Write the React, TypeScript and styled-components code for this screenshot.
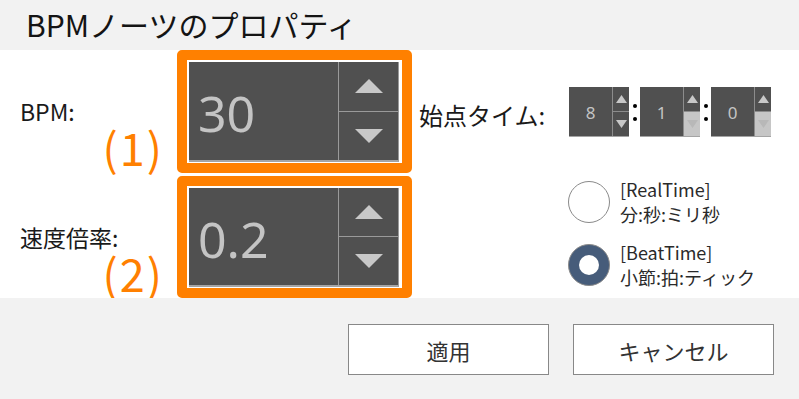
import styled, { createGlobalStyle } from 'styled-components'

const GlobalStyle = createGlobalStyle`
	html, body {
		margin: 0;
		padding: 0;
		background: #ffffff;
	}
	body {
		font-family: "Noto Sans CJK JP", "Noto Sans", sans-serif;
		color: #1a1a1a;
	}
`

const ORANGE = '#ff8000'
const FIELD = '#505050'
const ARROW = '#c8c8c8'

const Page = styled.div`
	display: flex;
	flex-direction: column;
	width: 799px;
	height: 399px;
	overflow: hidden;
`

const TitleBar = styled.div`
	display: flex;
	align-items: center;
	height: 50px;
	padding: 0 0 3px 26px;
	box-sizing: border-box;
	background: #f2f2f2;
	font-size: 30px;
	line-height: 1;
	color: #141414;
`

const Content = styled.div`
	display: flex;
	height: 248px;
	background: #ffffff;
`

const LeftGrid = styled.div`
	display: grid;
	grid-template-columns: 157px 235px;
	grid-template-rows: 123px 122px;
	row-gap: 3px;
	padding-left: 20px;
`

const LabelCell = styled.div`
	display: flex;
	flex-direction: column;
	justify-content: space-between;
	padding-right: 13px;
`

const Label = styled.div`
	margin-top: 48px;
	font-size: 23px;
	line-height: 26px;
	white-space: nowrap;
`

const Marker = styled.div`
	align-self: flex-end;
	font-size: 45px;
	line-height: 1;
	letter-spacing: 2px;
	color: ${ORANGE};
	margin-bottom: 4px;
`

const Frame = styled.div`
	display: flex;
	border: 10px solid ${ORANGE};
	border-radius: 5px;
	padding: 2px 3px 1px 2px;
	background: #ffffff;
`

const Field = styled.div`
	display: flex;
	flex: 1;
	background: ${FIELD};
	border-right: 1px solid #9a9a9a;
	border-bottom: 2px solid #a4a4a4;
`

const FieldValue = styled.div`
	display: flex;
	align-items: center;
	flex: 1;
	padding: 4px 0 0 9px;
	font-family: "Noto Sans", "Noto Sans CJK JP", sans-serif;
	font-size: 50px;
	color: #c4c4c4;
`

const SpinColumn = styled.div`
	display: flex;
	flex-direction: column;
	width: 59px;
	border-left: 1px solid #9a9a9a;
`

const SpinButton = styled.div<{ $first?: boolean }>`
	display: flex;
	flex: 1;
	align-items: center;
	justify-content: center;
	border-top: ${(p) => (p.$first ? 'none' : '1px solid #9a9a9a')};
`

const RightGrid = styled.div`
	display: grid;
	grid-template-columns: 150px auto;
	grid-template-rows: 50px auto;
	row-gap: 40px;
	padding: 37px 0 0 7px;
	align-content: start;
`

const TimeLabel = styled.div`
	align-self: center;
	padding-top: 5px;
	font-size: 24px;
	white-space: nowrap;
`

const TimeRow = styled.div`
	display: flex;
	align-items: stretch;
`

const TimeBox = styled.div`
	display: flex;
	background: ${FIELD};
	border-bottom: 1px solid #a4a4a4;
`

const TimeValue = styled.div`
	display: flex;
	align-items: center;
	justify-content: center;
	width: 43px;
	padding-top: 2px;
	font-family: "Noto Sans", sans-serif;
	font-size: 17px;
	color: #c4c4c4;
`

const TimeSpin = styled.div`
	display: flex;
	flex-direction: column;
	width: 16px;
	border-left: 1px solid #8c8c8c;
`

const TimeSpinButton = styled.div<{ $disabled?: boolean; $first?: boolean }>`
	display: flex;
	flex: 1;
	align-items: center;
	justify-content: center;
	background: ${(p) => (p.$disabled ? '#c6c6c6' : FIELD)};
	border-top: ${(p) => (p.$first ? 'none' : '1px solid #8c8c8c')};
`

const Colon = styled.div`
	display: flex;
	flex-direction: column;
	align-items: center;
	justify-content: center;
	gap: 9px;
	width: 11px;
	padding-top: 1px;
`

const Dot = styled.span`
	display: block;
	width: 4px;
	height: 4px;
	border-radius: 50%;
	background: #000000;
`

const RadioGroup = styled.div`
	grid-column: 2;
	display: flex;
	flex-direction: column;
	gap: 13px;
	margin-left: -1px;
`

const RadioItem = styled.div`
	display: flex;
	align-items: center;
	gap: 10px;
`

const RadioCircle = styled.span<{ $checked?: boolean }>`
	display: flex;
	align-items: center;
	justify-content: center;
	width: 42px;
	height: 42px;
	box-sizing: border-box;
	border-radius: 50%;
	border: 1px solid #8a8a8a;
	background: ${(p) => (p.$checked ? '#465c7a' : '#ffffff')};

	&::after {
		content: '';
		display: ${(p) => (p.$checked ? 'block' : 'none')};
		width: 20px;
		height: 20px;
		border-radius: 50%;
		background: #ffffff;
	}
`

const RadioText = styled.div`
	font-size: 18px;
	line-height: 25px;
	color: #2a2a2a;
`

const Footer = styled.div`
	display: flex;
	flex: 1;
	justify-content: flex-end;
	align-items: flex-start;
	gap: 24px;
	padding: 26px 25px 0 0;
	background: #f2f2f2;
`

const Button = styled.button`
	width: 201px;
	height: 51px;
	border: 1px solid #888888;
	background: #ffffff;
	font-family: "Noto Sans CJK JP", "Noto Sans", sans-serif;
	font-size: 22px;
	color: #333333;
	padding: 0;
`

const Arrow = ({ up, w, h, color }: { up: boolean; w: number; h: number; color: string }) => (
	<svg width={w} height={h} viewBox={`0 0 ${w} ${h}`}>
		<polygon points={up ? `0,${h} ${w / 2},0 ${w},${h}` : `0,0 ${w},0 ${w / 2},${h}`} fill={color} />
	</svg>
)

const NumberField = ({ value }: { value: string }) => (
	<Frame>
		<Field>
			<FieldValue>{value}</FieldValue>
			<SpinColumn>
				<SpinButton $first>
					<Arrow up w={28} h={14} color={ARROW} />
				</SpinButton>
				<SpinButton>
					<Arrow up={false} w={28} h={14} color={ARROW} />
				</SpinButton>
			</SpinColumn>
		</Field>
	</Frame>
)

const TimeField = ({ value, downDisabled }: { value: string; downDisabled?: boolean }) => (
	<TimeBox>
		<TimeValue>{value}</TimeValue>
		<TimeSpin>
			<TimeSpinButton $first>
				<Arrow up w={11} h={8} color={ARROW} />
			</TimeSpinButton>
			<TimeSpinButton $disabled={downDisabled}>
				<Arrow up={false} w={11} h={8} color={downDisabled ? '#b8b8b8' : ARROW} />
			</TimeSpinButton>
		</TimeSpin>
	</TimeBox>
)

const TimeColon = () => (
	<Colon>
		<Dot />
		<Dot />
	</Colon>
)

const App = () => {
	return (
		<>
			<GlobalStyle />
			<Page>
				<TitleBar>BPMノーツのプロパティ</TitleBar>
				<Content>
					<LeftGrid>
						<LabelCell>
							<Label>BPM:</Label>
							<Marker>(1)</Marker>
						</LabelCell>
						<NumberField value="30" />
						<LabelCell>
							<Label>速度倍率:</Label>
							<Marker>(2)</Marker>
						</LabelCell>
						<NumberField value="0.2" />
					</LeftGrid>
					<RightGrid>
						<TimeLabel>始点タイム:</TimeLabel>
						<TimeRow>
							<TimeField value="8" />
							<TimeColon />
							<TimeField value="1" downDisabled />
							<TimeColon />
							<TimeField value="0" downDisabled />
						</TimeRow>
						<RadioGroup>
							<RadioItem>
								<RadioCircle />
								<RadioText>
									[RealTime]
									<br />
									分:秒:ミリ秒
								</RadioText>
							</RadioItem>
							<RadioItem>
								<RadioCircle $checked />
								<RadioText>
									[BeatTime]
									<br />
									小節:拍:ティック
								</RadioText>
							</RadioItem>
						</RadioGroup>
					</RightGrid>
				</Content>
				<Footer>
					<Button>適用</Button>
					<Button>キャンセル</Button>
				</Footer>
			</Page>
		</>
	)
}

export default App
